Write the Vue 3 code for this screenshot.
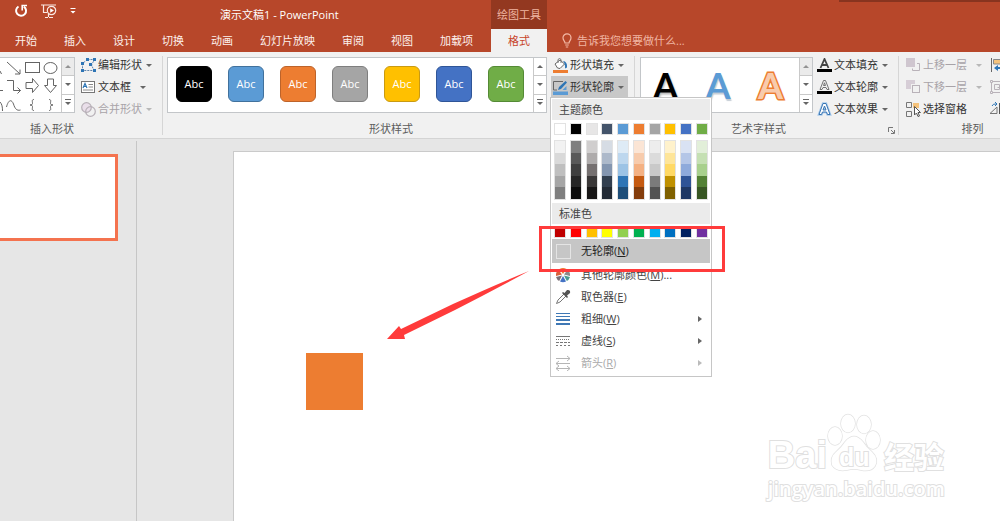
<script setup>
const tabs = ['开始', '插入', '设计', '切换', '动画', '幻灯片放映', '审阅', '视图', '加载项']

const shapeStyles = [
  { fill: '#000000', edge: '#000000' },
  { fill: '#5b9bd5', edge: '#41719c' },
  { fill: '#ed7d31', edge: '#bd632a' },
  { fill: '#a5a5a5', edge: '#7e7e7e' },
  { fill: '#ffc000', edge: '#c99a12' },
  { fill: '#4472c4', edge: '#2f5597' },
  { fill: '#70ad47', edge: '#548a35' },
]

const themeColors = ['#ffffff', '#000000', '#e7e6e6', '#44546a', '#5b9bd5', '#ed7d31', '#a5a5a5', '#ffc000', '#4472c4', '#70ad47']

const shades = [
  ['#f2f2f2', '#d9d9d9', '#bfbfbf', '#a6a6a6', '#7f7f7f'],
  ['#7f7f7f', '#595959', '#3f3f3f', '#262626', '#0c0c0c'],
  ['#d0cece', '#aeabab', '#757070', '#3a3838', '#171616'],
  ['#d6dce4', '#adb9ca', '#8496b0', '#323f4f', '#222a35'],
  ['#deebf6', '#bdd7ee', '#9cc3e5', '#2e75b5', '#1e4e79'],
  ['#fbe5d5', '#f7cbac', '#f4b183', '#c55a11', '#833c0b'],
  ['#ededed', '#dbdbdb', '#c9c9c9', '#7b7b7b', '#525252'],
  ['#fff2cc', '#fee599', '#ffd965', '#bf9000', '#7f6000'],
  ['#d9e2f3', '#b4c6e7', '#8eaadb', '#2f5496', '#1f3864'],
  ['#e2efd9', '#c5e0b3', '#a8d08d', '#538135', '#375623'],
]

const standardColors = ['#c00000', '#ff0000', '#ffc000', '#ffff00', '#92d050', '#00b050', '#00b0f0', '#0070c0', '#002060', '#7030a0']
</script>

<template>
  <div class="app">
    <header class="top">
      <div class="titlebar">
        <div class="quick">
          <button type="button" class="plain" aria-label="重复">
            <svg width="14" height="14" viewBox="0 0 14 14" fill="none" stroke="#fff" stroke-width="2">
              <path d="M4.5 2.5A5 5 0 1 0 9.8 2.6" />
              <path d="M8.2 6.5V1.5H13" stroke-width="1.6" />
            </svg>
          </button>
          <button type="button" class="plain" aria-label="从头开始放映">
            <svg width="16" height="16" viewBox="0 0 16 16" fill="none" stroke="#fbe9e4" stroke-width="1.2">
              <path d="M0 2H15M2.5 2V9.500H6M4 14.500H7M8 14.500H12M7.500 11V14" />
              <circle cx="10.500" cy="7.500" r="4.200" />
              <path d="M9.200 5.200L13 7.500L9.200 9.800Z" fill="#fff" stroke="none" />
            </svg>
          </button>
          <button type="button" class="plain" aria-label="自定义快速访问工具栏">
            <svg width="6" height="6" viewBox="0 0 6 6"><path d="M0.500 0H5.500V1H0.500ZM0.500 3H5.500L3 5.500Z" fill="#fff" /></svg>
          </button>
        </div>
        <h1>演示文稿1 - PowerPoint</h1>
        <div class="context">绘图工具</div>
        <div class="edge"></div>
      </div>
      <nav class="tabs">
        <button v-for="t in tabs" :key="t" type="button" class="tab">{{ t }}</button>
        <button type="button" class="tab active">格式</button>
        <label class="tell">
          <svg width="10" height="15" viewBox="0 0 10 15" fill="none" stroke="#f3b9a6" stroke-width="1.200">
            <path d="M3 10C3 8 1 7.500 1 4.800A4 4 0 0 1 9 4.800C9 7.500 7 8 7 10ZM3.200 12H6.800M3.800 14H6.200" />
          </svg>
          <input type="text" placeholder="告诉我您想要做什么..." aria-label="告诉我您想要做什么" />
        </label>
      </nav>
    </header>

    <section class="ribbon">
      <div class="group insert">
        <div class="body">
          <div class="gallery shapes">
            <svg width="61" height="54" viewBox="0 1 61 54" fill="none" stroke="#646464">
              <path d="M0 14L1.500 17M7 5L20 17M20 12.500V17H15" />
              <rect x="25.500" y="5.500" width="14" height="10" />
              <ellipse cx="50.500" cy="11" rx="6.500" ry="5.500" />
              <path d="M0 33.500H3M7 23.500H13.500V33.500H20.500M17.500 30.500L20.500 33.500L17.500 36.500" />
              <path d="M26 25.500H32.500V21.500L38.500 28.500L32.500 35.500V31.500H26Z" />
              <path d="M47.500 22V28.500H44.500L50.500 35.500L56.500 28.500H53.500V22Z" />
              <path d="M0 45C2 47 2.500 50 2.500 54M6.500 50C8 44 11 41 13.500 47C15 52 17 54 20.500 53" />
              <path d="M34 42.500C31.500 42.500 32.500 44.500 32.500 46.500Q32.500 48 30 48Q32.500 48 32.500 49.500C32.500 51.500 31.500 53.500 34 53.500" />
              <path d="M49 42.500C51.500 42.500 50.500 44.500 50.500 46.500Q50.500 48 53 48Q50.500 48 50.500 49.500C50.500 51.500 51.500 53.500 49 53.500" />
            </svg>
            <div class="scroll">
              <button type="button" class="off" aria-label="上一行"><i class="tri up"></i></button>
              <button type="button" aria-label="下一行"><i class="tri"></i></button>
              <button type="button" aria-label="其他形状"><i class="tri more"></i></button>
            </div>
          </div>
          <div class="cmds">
            <button type="button" class="cmd">
              <svg width="15" height="14" viewBox="0 0 15 14">
                <path d="M6.500 1.500H13.500L10.500 7L13 12.500H1.500V5.500Z" fill="none" stroke="#5f84ad" stroke-dasharray="2 1" />
                <path d="M5 0h3v3h-3zM12 0h3v3h-3zM0 4h3v3h-3zM8 5h3v3h-3zM0 11h3v3h-3zM12 11h3v3h-3z" fill="#2e75b5" />
              </svg>
              <span>编辑形状</span><i class="tri"></i>
            </button>
            <button type="button" class="cmd">
              <svg width="15" height="13" viewBox="0 0 15 13" fill="none">
                <rect x="0.500" y="0.500" width="13" height="11" fill="#fff" stroke="#777" />
                <path d="M2 7L4 2.500L6 7M2.700 5.500H5.300" stroke="#2e75b5" stroke-width="1.200" />
                <path d="M7.500 3.500H12M7.500 6H12M2 9H12" stroke="#888" />
              </svg>
              <span>文本框</span><i class="tri far"></i>
            </button>
            <button type="button" class="cmd" disabled>
              <svg width="15" height="15" viewBox="0 0 15 15" fill="none" stroke="#b7b0b7" stroke-width="1.200">
                <circle cx="5.500" cy="5.500" r="4.800" fill="#eadfea" /><circle cx="9.500" cy="9.500" r="4.800" />
              </svg>
              <span>合并形状</span><i class="tri"></i>
            </button>
          </div>
        </div>
        <div class="caption">插入形状</div>
      </div>

      <div class="group styles">
        <div class="body">
          <div class="gallery">
            <div class="presets">
              <button v-for="s in shapeStyles" :key="s.fill" type="button" :style="{ background: s.fill, borderColor: s.edge }">Abc</button>
            </div>
            <div class="scroll">
              <button type="button" aria-label="上一行"><i class="tri up"></i></button>
              <button type="button" aria-label="下一行"><i class="tri"></i></button>
              <button type="button" aria-label="其他样式"><i class="tri more"></i></button>
            </div>
          </div>
          <div class="cmds">
            <button type="button" class="cmd">
              <svg width="15" height="15" viewBox="0 0 15 15" fill="none">
                <path d="M2 6L7 2L11.500 6L7 10.500L4.500 10Z" fill="#fff" stroke="#666" />
                <path d="M5 5V1.500Q6.500 -0.500 8 1.500V5" stroke="#777" />
                <path d="M10 3Q14.500 3.500 14 9.500L12 10.500Q12.500 6 10 3Z" fill="#2e75b5" />
                <path d="M0 12H15V15H0Z" fill="#ed7d31" />
              </svg>
              <span>形状填充</span><i class="tri"></i>
            </button>
            <div class="drop">
              <button type="button" class="cmd open" aria-haspopup="menu" aria-expanded="true">
                <svg width="15" height="15" viewBox="0 0 15 15" fill="none">
                  <path d="M10 1.500H0.500V10H4" stroke="#666" />
                  <path d="M5 10L6 7L12.500 1L14 2.500L8 9Z" fill="#2e75b5" />
                  <path d="M9.500 10L13.500 6V10Z" fill="#5b9bd5" />
                  <path d="M0 11.500H15V15H0Z" fill="#5b9bd5" />
                </svg>
                <span>形状轮廓</span><i class="tri"></i>
              </button>
              <div class="menu" role="menu">
                <div class="head">主题颜色</div>
                <div class="row theme">
                  <button v-for="c in themeColors" :key="c" type="button" class="chip" :aria-label="c" :style="{ background: c }"></button>
                </div>
                <div class="row ramps">
                  <div v-for="(col, i) in shades" :key="i" class="ramp">
                    <button v-for="c in col" :key="c" type="button" :aria-label="c" :style="{ background: c }"></button>
                  </div>
                </div>
                <div class="head">标准色</div>
                <div class="row standard">
                  <button v-for="c in standardColors" :key="c" type="button" class="chip" :aria-label="c" :style="{ background: c }"></button>
                </div>
                <button type="button" role="menuitem" class="item hot">
                  <svg width="16" height="16" viewBox="0 0 16 16"><rect x="1.500" y="1.500" width="14" height="14" fill="none" stroke="#e4e4e4" /></svg>
                  <span>无轮廓(<u>N</u>)</span>
                </button>
                <button type="button" role="menuitem" class="item">
                  <svg width="16" height="16" viewBox="0 0 16 16">
                    <path d="M8 7L4.500 2Q8 0 11.500 2Z" fill="#ed7d31" />
                    <path d="M9 7.500L12.500 3Q15.500 5 15 9Z" fill="#8a8a8a" />
                    <path d="M9 8.500L15 10Q14 13 11.800 14Z" fill="#4b9b91" />
                    <path d="M8 9L11 14.500Q8 16 5 14.500Z" fill="#4472c4" />
                    <path d="M7 8.500L4.200 14Q2 13 1 10Z" fill="#7b6f76" />
                    <path d="M7 7.500L1 9Q0.500 5 3.500 3Z" fill="#d9603b" />
                  </svg>
                  <span>其他轮廓颜色(<u>M</u>)...</span>
                </button>
                <button type="button" role="menuitem" class="item">
                  <svg width="16" height="16" viewBox="0 0 16 16">
                    <path d="M1.500 14.500L3 11L9 5L11 7L5 13Z" fill="#fff" stroke="#777" />
                    <path d="M8 3L9.500 4L12 1Q14 0.500 15 2Q15.500 4 14.500 4.500L12 6.500L13 8L12 9L7 4Z" fill="#555" />
                  </svg>
                  <span>取色器(<u>E</u>)</span>
                </button>
                <button type="button" role="menuitem" class="item">
                  <svg width="16" height="16" viewBox="0 0 16 16" fill="#3f78b5"><path d="M1 2h14v1h-14zM1 5h14v1h-14zM1 8h14v2h-14zM1 12h14v2h-14z" /></svg>
                  <span>粗细(<u>W</u>)</span><i class="sub"></i>
                </button>
                <button type="button" role="menuitem" class="item">
                  <svg width="16" height="16" viewBox="0 0 16 16" stroke="#777">
                    <path d="M1 3.500H15" /><path d="M1 6.500H15" stroke-dasharray="1 1" /><path d="M1 9.500H15" stroke-dasharray="3 1" /><path d="M1 12.500H15" stroke-dasharray="2 2" />
                  </svg>
                  <span>虚线(<u>S</u>)</span><i class="sub"></i>
                </button>
                <button type="button" role="menuitem" class="item" disabled>
                  <svg width="16" height="16" viewBox="0 0 16 16" fill="none" stroke="#b5b5b5">
                    <path d="M1 3.500H15M12 1L15 3.500L12 6M1 8.500H15M4 6L1 8.500L4 11M1 13.500H15M4 11L1 13.500L4 16M12 11L15 13.500L12 16" />
                  </svg>
                  <span>箭头(<u>R</u>)</span><i class="sub"></i>
                </button>
                <div class="callout"></div>
              </div>
            </div>
          </div>
        </div>
        <div class="caption">形状样式</div>
      </div>

      <div class="group art">
        <div class="body">
          <div class="gallery">
            <div class="letters">
              <button type="button" class="a1">A</button>
              <button type="button" class="a2">A</button>
              <button type="button" class="a3">A</button>
            </div>
            <div class="scroll">
              <button type="button" class="off" aria-label="上一行"><i class="tri up"></i></button>
              <button type="button" aria-label="下一行"><i class="tri"></i></button>
              <button type="button" aria-label="其他艺术字"><i class="tri more"></i></button>
            </div>
          </div>
          <div class="cmds">
            <button type="button" class="cmd">
              <svg width="15" height="15" viewBox="0 0 15 15" fill="none">
                <path d="M3.500 10L7.500 1L11.500 10M5 7H10" stroke="#444" stroke-width="1.800" /><path d="M0 11H15V14H0Z" fill="#000" />
              </svg>
              <span>文本填充</span><i class="tri"></i>
            </button>
            <button type="button" class="cmd">
              <svg width="15" height="15" viewBox="0 0 15 15" fill="none">
                <path d="M3 9.500L6.500 0.500H8.500L12 9.500H10L9 7.500H6L5 9.500ZM6.500 5.500H8.500L7.500 2.800Z" stroke="#666" stroke-width="0.900" /><path d="M0 11H15V14H0Z" fill="#000" />
              </svg>
              <span>文本轮廓</span><i class="tri"></i>
            </button>
            <button type="button" class="cmd">
              <svg width="15" height="15" viewBox="0 0 15 15" fill="none">
                <path d="M2 12.500L6 1.500H9L13 12.500H10.500L9.500 10H5.500L4.500 12.500ZM6 8H9L7.500 4Z" stroke="#a9cbec" stroke-width="2.500" />
                <path d="M2 12.500L6 1.500H9L13 12.500H10.500L9.500 10H5.500L4.500 12.500ZM6 8H9L7.500 4Z" fill="#fff" stroke="#3975b3" />
              </svg>
              <span>文本效果</span><i class="tri"></i>
            </button>
          </div>
        </div>
        <div class="caption">艺术字样式
          <button type="button" class="launcher" aria-label="设置文本效果格式">
            <svg width="7" height="7" viewBox="0 0 7 7" fill="none" stroke="#777"><path d="M0.500 5V0.500H5M3 3L6 6M6.500 3V6.500H3" /></svg>
          </button>
        </div>
      </div>

      <div class="group arrange">
        <div class="body">
          <div class="cmds">
            <button type="button" class="cmd" disabled>
              <svg width="15" height="14" viewBox="0 0 15 14"><path d="M0 0H9V9H0Z" fill="#cfc6cf" /><path d="M11 5.500H13.500V12.500H6.500V10.500" fill="none" stroke="#b9b2b9" /></svg>
              <span>上移一层</span><i class="tri far"></i>
            </button>
            <button type="button" class="cmd" disabled>
              <svg width="15" height="14" viewBox="0 0 15 14"><path d="M0 0H9V4H5V9H0Z" fill="#d6cdd6" /><rect x="6.500" y="5.500" width="7" height="7" fill="none" stroke="#b9b2b9" /></svg>
              <span>下移一层</span><i class="tri far"></i>
            </button>
            <button type="button" class="cmd">
              <svg width="15" height="15" viewBox="0 0 15 15" fill="none">
                <path d="M0.500 0.500H5.500V5.500H0.500ZM0.500 9.500H5.500V14.500H0.500Z" stroke="#777" /><path d="M7 1H13V6H7Z" fill="#f5c37c" />
                <path d="M8.500 4.500V13L10.500 11L12 14.500L13.500 14L12 10.500H14.500Z" fill="#fff" stroke="#555" />
              </svg>
              <span>选择窗格</span>
            </button>
          </div>
          <div class="cmds cut">
            <button type="button" class="cmd" aria-label="对齐">
              <svg width="12" height="14" viewBox="0 0 12 14"><path d="M1.500 0V14" stroke="#666" /><path d="M3.500 1.500H12V6H3.500Z" fill="#f5c37c" stroke="#888" /><path d="M12 9V11H8V13L4 10L8 7V9Z" fill="#2e75b5" /></svg>
            </button>
            <button type="button" class="cmd" disabled aria-label="组合">
              <svg width="12" height="14" viewBox="0 0 12 14" fill="none" stroke="#b9b2b9"><path d="M1.500 3V11M3 1.500H12M3 12.500H12M4.500 4.500H9.500V9.500H4.500ZM7.500 7.500H12" /><path d="M0.500 0.500h2v2h-2zM0.500 11.500h2v2h-2z" /></svg>
            </button>
            <button type="button" class="cmd" aria-label="旋转">
              <svg width="12" height="14" viewBox="0 0 12 14" fill="none"><path d="M0 11.500H7V5Z" stroke="#777" /><path d="M2 4Q3 1.500 6 2M5 0L7 2L5 4" stroke="#2e75b5" /><path d="M9 1H12V12H9Z" fill="#555" /></svg>
            </button>
          </div>
        </div>
        <div class="caption">排列</div>
      </div>
    </section>

    <main class="work">
      <aside><div class="thumb"></div></aside>
      <div class="stage">
        <div class="slide">
          <div class="square"></div>
          <svg class="arrow" width="143" height="70" viewBox="0 0 143 70"><path d="M0 68L12 55L14 58L66 33Q110 13 142 0Q105 20 68 39L17 64L18 68Z" fill="#ff3b3b" /></svg>
          <div class="mark">
            <div class="brand">
              <span class="bai">Bai</span>
              <span class="paw">
                <svg width="54" height="60" viewBox="0 0 54 60" fill="#fff" stroke="#e2e2e2" stroke-width="1.500">
                  <ellipse cx="8" cy="23" rx="7" ry="9" /><ellipse cx="21" cy="10.500" rx="7" ry="9" />
                  <ellipse cx="37" cy="11.500" rx="7" ry="9" /><ellipse cx="46" cy="27" rx="7" ry="9" />
                  <path d="M18 29Q27 18 36 29Q39 34 45 39Q52 46 48 53Q44 59 34 57Q27 55 20 57Q9 59 5 52Q3 44 9 39Q15 34 18 29Z" />
                </svg>
                <b>du</b>
              </span>
              <span class="jy">经验</span>
            </div>
            <div class="url">jingyan.baidu.com</div>
          </div>
        </div>
      </div>
    </main>
  </div>
</template>

<style>
body { background: #e6e6e6; overflow: hidden; }
</style>

<style scoped>
.app {
  display: flex;
  flex-direction: column;
  height: 100vh;
  font: 11px/16px "Open Sans", "Noto Sans CJK SC", sans-serif;
  color: #444;
}
.app * { box-sizing: border-box; }
button {
  appearance: none;
  border: 0;
  margin: 0;
  padding: 0;
  background: none;
  font: inherit;
  color: inherit;
  white-space: nowrap;
}
svg { display: block; flex: none; }
.top { background: #b7472a; color: #fff; }
.titlebar { display: flex; height: 29px; }
.quick { display: flex; align-items: center; gap: 13px; width: 220px; height: 21px; padding-left: 14px; }
h1 { width: 271px; margin: 0; font: inherit; line-height: 29px; }
.context { width: 56px; background: #933820; color: #f0b5a2; line-height: 29px; text-align: center; }
.edge { flex: 1; height: 2px; margin-left: 292px; background: #88341f; }
.tabs { display: flex; height: 23px; padding-left: 2px; }
.tab { padding: 0 14px 0 13px; color: #fdf1ed; }
.tab.active { width: 56px; margin-left: 4px; padding: 0; background: #f1f1f1; color: #c8452a; }
.tell { display: flex; align-items: center; gap: 5px; margin-left: 15px; }
.tell input { width: 150px; border: 0; padding: 0; background: none; color: #fff; font: inherit; outline: 0; }
.tell input::placeholder { color: #f0b5a2; opacity: 1; }

.ribbon { display: flex; height: 87px; flex: none; background: #f1f1f1; border-bottom: 1px solid #d4d4d4; }
.group { display: flex; flex-direction: column; flex: none; position: relative; padding-top: 2px; }
.group::after { content: ""; position: absolute; right: 0; top: 4px; bottom: 3px; width: 1px; background: #d6d6d6; }
.body { display: flex; height: 66px; }
.caption { line-height: 18px; text-align: center; color: #5c5c5c; }
.insert { width: 163px; }
.insert .caption { padding-right: 59px; }
.styles { width: 472px; padding-left: 4px; }
.styles .caption { padding-right: 20px; }
.art { width: 264px; padding-left: 5px; }
.art .caption { padding-right: 22px; }
.arrange { flex: 1; min-width: 101px; overflow: hidden; }
.arrange::after { display: none; }
.arrange .caption { padding-left: 46px; }
.launcher { position: absolute; right: 4px; bottom: 4px; }

.gallery { display: flex; flex: none; height: 56px; margin-top: 3px; background: #fff; border: 1px solid #c3c6c9; }
.shapes { border-left: 0; }
.scroll { display: flex; flex-direction: column; width: 13px; border-left: 1px solid #c9c9c9; }
.scroll button { display: flex; flex: 1; align-items: center; justify-content: center; }
.scroll button + button { border-top: 1px solid #c9c9c9; }
.scroll .off { background: #e3e3e3; opacity: 0.7; }
.tri { position: relative; width: 0; height: 0; border: 3px solid transparent; border-top-color: #666; border-bottom-width: 0; }
.tri.up { border-top-width: 0; border-bottom: 3px solid #666; }
.tri.more::before { content: ""; position: absolute; left: -3px; top: -6px; width: 6px; height: 1px; background: #666; }

.presets { display: flex; align-items: center; gap: 16px; padding: 0 9px 2px 8px; }
.presets button { width: 36px; height: 36px; border: 1px solid; border-radius: 6px; color: #fff; }
.letters { display: flex; align-items: center; justify-content: space-between; width: 158px; padding: 0 16px 0 12px; font: bold 36px/40px Lato, sans-serif; }
.a1 { color: #000; text-shadow: 1px 2px 2px #bbb; }
.a2 { color: #5b9bd5; text-shadow: 1px 2px 1px #c5cdd5; }
.a3 { color: #f8cbad; -webkit-text-stroke: 3px #ed7d31; paint-order: stroke fill; }

.cmds { display: flex; flex-direction: column; margin-left: 4px; }
.insert .cmds { margin-left: 4px; }
.art .cmds { margin-left: 2px; }
.arrange .cmds { margin-left: 5px; }
.arrange .cut { margin-left: 4px; }
.cut .cmd { padding-left: 0; }
.cmd { display: flex; align-items: center; height: 22px; padding: 0 4px 0 2px; color: #333; }
.cmd span { margin-left: 2px; }
.cmd .tri { margin-left: 4px; }
.cmd .tri.far { margin-left: 9px; }
.cmd:disabled { color: #a8a3a8; }
.cmd:disabled .tri { border-top-color: #b8b8b8; }
.cmd.open { background: #c8c8c8; }

.drop { position: relative; }
.menu {
  position: absolute;
  z-index: 2;
  left: -1px;
  top: 21px;
  width: 162px;
  padding: 1px 1px 2px;
  background: #fff;
  border: 1px solid #c6c6c6;
}
.head { height: 21px; padding-left: 7px; background: #ebebeb; line-height: 21px; }
.row { display: flex; justify-content: space-between; padding: 0 2px; }
.theme { padding-top: 3px; padding-bottom: 5px; }
.chip { width: 12px; height: 12px; border: 1px solid #e2e2e2; }
.ramps { padding-bottom: 3px; }
.ramp { display: flex; flex-direction: column; width: 12px; height: 60px; border: 1px solid #e2e2e2; }
.ramp button { flex: 1; }
.standard { padding-top: 2px; padding-bottom: 1px; }
.item { display: flex; align-items: center; width: 100%; height: 22px; padding: 0 8px 0 3px; }
.item span { flex: 1; margin-left: 10px; text-align: left; }
.item.hot { height: 24px; margin-bottom: 1px; background: #c6c6c6; color: #222; }
.item:disabled { color: #aaa; }
.sub { border: 3px solid transparent; border-left: 4px solid #666; border-right: 0; }
.item:disabled .sub { border-left-color: #bbb; }
.callout { position: absolute; left: -12px; top: 128px; width: 186px; height: 46px; border: 3px solid #ff3b3b; pointer-events: none; }

.work { display: flex; flex: 1; min-height: 0; padding-top: 2px; background: #e6e6e6; }
aside { width: 137px; flex: none; padding-top: 13px; border-right: 1px solid #c6c6c6; }
.thumb { width: 118px; height: 87px; background: #fff; border: 3px solid #f4734f; border-left: 0; }
.stage { display: flex; flex: 1; padding: 10px 0 0 96px; }
.slide { position: relative; flex: 1; background: #fff; border: 1px solid #cacaca; border-width: 1px 0 0 1px; }
.square { position: absolute; left: 72px; top: 201px; width: 57px; height: 57px; background: #ed7d31; }
.arrow { position: absolute; left: 153px; top: 119px; }
.mark { position: absolute; right: 54px; bottom: 20px; color: #fff; -webkit-text-stroke: 2px #e0e0e0; paint-order: stroke fill; }
.brand { display: flex; align-items: flex-end; justify-content: flex-end; height: 60px; padding-right: 2px; }
.bai { font: bold 38px/36px "Liberation Sans", sans-serif; }
.paw { position: relative; }
.paw b { position: absolute; left: 12px; bottom: 3px; font: bold 25px/25px "Liberation Sans", sans-serif; }
.jy { margin-left: 3px; font: bold 30px/36px "Noto Sans CJK SC", sans-serif; }
.url { margin-top: 4px; font: 600 20px/24px "Open Sans", sans-serif; }
</style>
